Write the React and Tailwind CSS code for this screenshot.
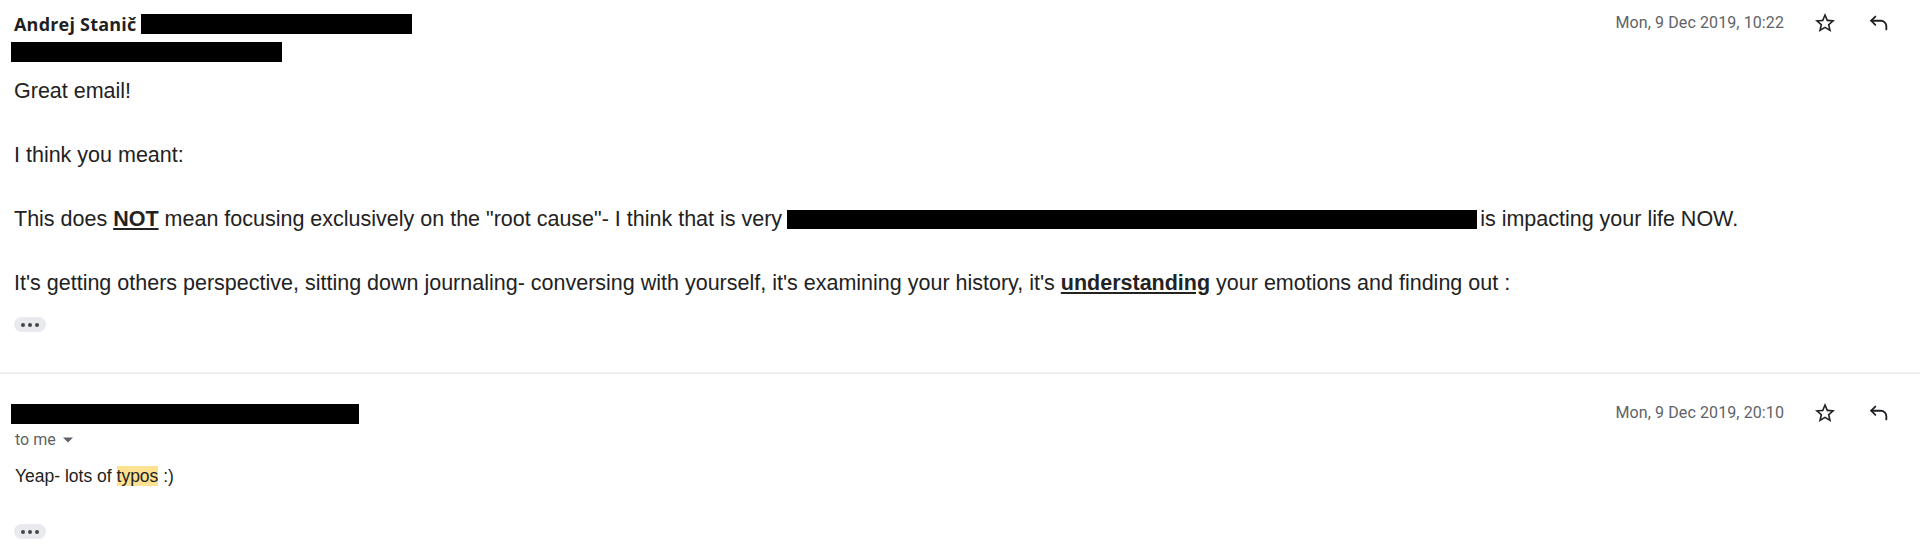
import React from "react";

function StarIcon() {
  return (
    <svg className="w-[24px] h-[24px]" viewBox="0 0 24 24" fill="#202124">
      <path d="M22 9.24l-7.19-.62L12 2 9.19 8.63 2 9.24l5.46 4.73L5.82 21 12 17.27 18.18 21l-1.63-7.03L22 9.24zM12 15.4l-3.76 2.27 1-4.28-3.32-2.88 4.38-.38L12 6.1l1.71 4.04 4.38.38-3.32 2.88 1 4.28L12 15.4z" />
    </svg>
  );
}

function ReplyIcon() {
  return (
    <svg className="w-[22px] h-[22px]" viewBox="0 0 24 24" fill="none" stroke="#202124" strokeWidth="2" strokeLinecap="round" strokeLinejoin="round">
      <path d="M8 5L3.5 9.5L8 14" />
      <path d="M3.5 9.5H14a6 6 0 0 1 6 6V19" />
    </svg>
  );
}

function Actions({ date }) {
  return (
    <div className="flex items-center -mt-[3px]">
      <span className="font-['Roboto'] text-[16px] text-[#5f6368] tracking-[0.1px]">{date}</span>
      <div className="ml-[29px] flex items-center">
        <StarIcon />
      </div>
      <div className="ml-[31px] flex items-center">
        <ReplyIcon />
      </div>
    </div>
  );
}

function MoreButton() {
  return (
    <div className="w-[32px] h-[15px] rounded-full bg-[#e8eaed] flex items-center justify-center gap-[3px]">
      <span className="w-[4px] h-[4px] rounded-full bg-[#444746]"></span>
      <span className="w-[4px] h-[4px] rounded-full bg-[#444746]"></span>
      <span className="w-[4px] h-[4px] rounded-full bg-[#444746]"></span>
    </div>
  );
}

export default function App() {
  return (
    <div className="w-full min-h-screen bg-white text-[#222222] font-['Liberation_Sans',Arial,sans-serif] overflow-hidden">
      {/* first message */}
      <div className="pr-[30px]">
        <div className="flex justify-between items-start pt-[14px]">
          <div>
            <div className="flex items-center h-[20px] pl-[14px]">
              <span className="font-['Open_Sans'] font-bold text-[18px] tracking-[0.2px] text-[#1f1f1f]">Andrej Stanič</span>
              <span className="block ml-[5px] w-[271px] h-[20px] bg-black"></span>
            </div>
            <div className="pl-[11px] mt-[8px]">
              <span className="block w-[271px] h-[20px] bg-black"></span>
            </div>
          </div>
          <Actions date="Mon, 9 Dec 2019, 10:22" />
        </div>

        <div className="pl-[14px] mt-[13px] text-[21.5px] leading-[32px] text-[#222222]">
          <div>Great email!</div>
          <div className="h-[32px]"></div>
          <div>I think you meant:</div>
          <div className="h-[32px]"></div>
          <div className="flex items-center whitespace-nowrap">
            <span>
              This does <b className="underline underline-offset-2">NOT</b> mean focusing exclusively on the "root cause"- I think that is very
            </span>
            <span className="block ml-[5px] mr-[3px] w-[690px] h-[19px] bg-black"></span>
            <span>is impacting your life NOW.</span>
          </div>
          <div className="h-[32px]"></div>
          <div className="whitespace-nowrap">
            It's getting others perspective, sitting down journaling- conversing with yourself, it's examining your history, it's{" "}
            <b className="underline underline-offset-2">understanding</b> your emotions and finding out :
          </div>
        </div>
        <div className="pl-[14px] mt-[18px]">
          <MoreButton />
        </div>
      </div>

      <div className="mt-[40px] h-[2px] bg-[#eeeeee]"></div>

      {/* second message */}
      <div className="pr-[30px]">
        <div className="flex justify-between items-start pt-[30px]">
          <div>
            <div className="pl-[11px]">
              <span className="block w-[348px] h-[20px] bg-black"></span>
            </div>
            <div className="pl-[15px] mt-[6px] flex items-center h-[20px] text-[#5f6368]">
              <span className="font-['Roboto'] text-[16px]">to me</span>
              <svg className="ml-[7px] w-[10px] h-[6px]" viewBox="0 0 10 5" fill="#5f6368">
                <path d="M0 0L5 5L10 0Z" />
              </svg>
            </div>
          </div>
          <Actions date="Mon, 9 Dec 2019, 20:10" />
        </div>

        <div className="pl-[15px] mt-[14px] text-[17.5px] leading-[24px] text-[#222222]">
          Yeap- lots of <span className="bg-[#fde293]">typos</span> :)
        </div>
        <div className="pl-[14px] mt-[36px]">
          <MoreButton />
        </div>
      </div>
    </div>
  );
}
